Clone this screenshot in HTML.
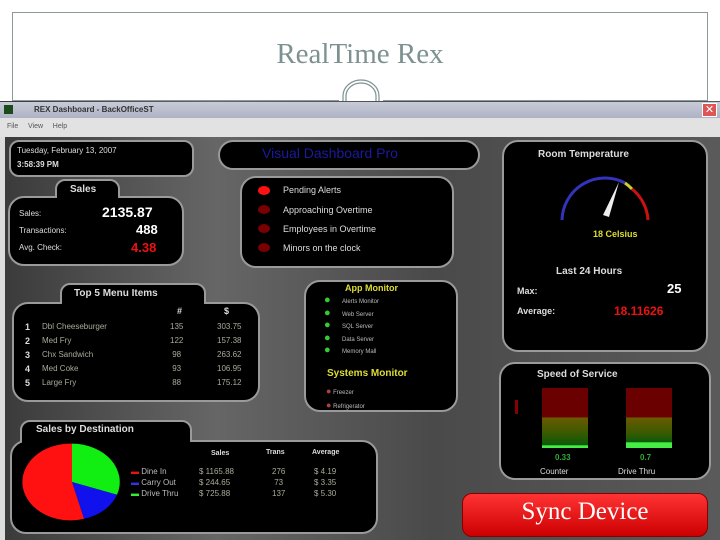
<!DOCTYPE html>
<html><head><meta charset="utf-8"><style>
*{margin:0;padding:0;box-sizing:border-box}
body{width:720px;height:540px;overflow:hidden;background:#fff;position:relative;font-family:"Liberation Sans",sans-serif}
.a{position:absolute}
.p{position:absolute;background:#000;border:2px solid #9a9a9a;border-radius:16px}
.t{position:absolute;font-size:9px;color:#ddd;white-space:nowrap}
.b{font-weight:bold}
</style></head><body>
<div class="a" style="left:12px;top:12px;width:696px;height:89px;border:1px solid #8a9a99"></div>
<div class="a" style="left:0;top:38px;width:720px;text-align:center;font-family:'Liberation Serif',serif;font-size:29px;color:#7d9190">Real​Time Rex</div>
<div class="a" style="left:339px;top:78px;width:44px;height:28px;background:#fff"></div>
<svg class="a" style="left:338px;top:78px" width="46" height="26"><path d="M5 26 V18 A18 16 0 0 1 41 18 V26" fill="none" stroke="#7d9190" stroke-width="1.2"/><path d="M8 26 V18 A15 13 0 0 1 38 18 V26" fill="none" stroke="#7d9190" stroke-width="1.2"/></svg>
<div class="a" style="left:0;top:101px;width:720px;height:439px;background:linear-gradient(90deg,#3a3a3a,#666 30%,#4a4a4a 60%,#5a5a5a)"></div>
<div class="a" style="left:0;top:102px;width:720px;height:16px;background:linear-gradient(#c8cbd8,#aeb2c4)"></div>
<div class="a" style="left:4px;top:105px;width:9px;height:9px;background:#1b4a1b"></div>
<div class="t b" style="left:34px;top:105px;color:#333;font-size:8px">REX Dashboard - BackOfficeST</div>
<div class="a" style="left:702px;top:103px;width:15px;height:14px;background:#d55;border:1px solid #fff;color:#fff;font-size:11px;text-align:center;line-height:12px">✕</div>
<div class="a" style="left:0;top:118px;width:720px;height:19px;background:#e2e2e2"></div>
<div class="t" style="left:7px;top:123px;color:#555;font-size:7px">File&nbsp;&nbsp;&nbsp;&nbsp;&nbsp;View&nbsp;&nbsp;&nbsp;&nbsp;&nbsp;Help</div>
<div class="a" style="left:0;top:137px;width:5px;height:403px;background:#ddd"></div>

<div class="p" style="left:9px;top:140px;width:185px;height:37px;border-radius:10px"></div>
<div class="t" style="left:17px;top:146px;font-size:8px">Tuesday, February 13, 2007</div>
<div class="t b" style="left:17px;top:160px;font-size:8px">3:58:39 PM</div>
<div class="p" style="left:218px;top:140px;width:262px;height:30px;border-radius:15px"></div>
<div class="t" style="left:262px;top:145px;font-size:14px;color:#1a1aa0">Visual Dashboard Pro</div>

<div class="p" style="left:240px;top:176px;width:214px;height:92px"></div>
<div class="a" style="left:258px;top:186px;width:12px;height:9px;border-radius:50%;background:#f11"></div>
<div class="a" style="left:258px;top:205px;width:12px;height:9px;border-radius:50%;background:#700"></div>
<div class="a" style="left:258px;top:224px;width:12px;height:9px;border-radius:50%;background:#700"></div>
<div class="a" style="left:258px;top:243px;width:12px;height:9px;border-radius:50%;background:#700"></div>
<div class="t" style="left:283px;top:185px">Pending Alerts</div>
<div class="t" style="left:283px;top:205px">Approaching Overtime</div>
<div class="t" style="left:283px;top:224px">Employees in Overtime</div>
<div class="t" style="left:283px;top:243px">Minors on the clock</div>

<div class="p" style="left:55px;top:179px;width:65px;height:26px;border-radius:10px 10px 0 0"></div>
<div class="p" style="left:8px;top:196px;width:176px;height:70px"></div>
<div class="a" style="left:57px;top:194px;width:61px;height:6px;background:#000"></div>
<div class="t b" style="left:70px;top:184px;font-size:10px">Sales</div>
<div class="t" style="left:19px;top:209px;font-size:8px">Sales:</div>
<div class="t" style="left:19px;top:226px;font-size:8px">Transactions:</div>
<div class="t" style="left:19px;top:243px;font-size:8px">Avg. Check:</div>
<div class="t b" style="left:102px;top:204px;font-size:14px;color:#fff">2135.87</div>
<div class="t b" style="left:136px;top:222px;font-size:13px;color:#fff">488</div>
<div class="t b" style="left:131px;top:240px;font-size:13px;color:#e11">4.38</div>

<div class="p" style="left:502px;top:140px;width:206px;height:212px"></div>
<div class="t b" style="left:538px;top:149px;font-size:10px">Room Temperature</div>
<svg class="a" style="left:555px;top:170px" width="100" height="55"><path d="M7 50 A43 43 0 0 1 70 13" fill="none" stroke="#3333bb" stroke-width="3"/><path d="M70 13 A43 43 0 0 1 77 19" fill="none" stroke="#cc3" stroke-width="3"/><path d="M77 19 A43 43 0 0 1 93 50" fill="none" stroke="#c11" stroke-width="3"/><path d="M48 45 L64 12 L54 47 Z" fill="#eee"/></svg>
<div class="t b" style="left:593px;top:229px;color:#dd3">18 Celsius</div>
<div class="t b" style="left:556px;top:266px;font-size:10px">Last 24 Hours</div>
<div class="t b" style="left:517px;top:286px;font-size:9px">Max:</div>
<div class="t b" style="left:667px;top:281px;font-size:13px;color:#fff">25</div>
<div class="t b" style="left:517px;top:306px;font-size:9px">Average:</div>
<div class="t b" style="left:614px;top:304px;font-size:12px;color:#e11">18.11626</div>

<div class="p" style="left:60px;top:283px;width:146px;height:26px;border-radius:10px 10px 0 0"></div>
<div class="p" style="left:12px;top:302px;width:248px;height:100px"></div>
<div class="a" style="left:62px;top:300px;width:142px;height:7px;background:#000"></div>
<div class="t b" style="left:74px;top:288px;font-size:10px">Top 5 Menu Items</div>
<div class="t b" style="left:177px;top:306px">#</div><div class="t b" style="left:224px;top:306px">$</div>
<div class="t b" style="left:25px;top:320px;line-height:14px;font-size:9px">1<br>2<br>3<br>4<br>5</div>
<div class="t" style="left:42px;top:320px;line-height:14px;font-size:8px;color:#aa9">Dbl Cheeseburger<br>Med Fry<br>Chx Sandwich<br>Med Coke<br>Large Fry</div>
<div class="t" style="left:170px;top:320px;line-height:14px;font-size:8px;color:#aa9">135<br>122<br>&nbsp;98<br>&nbsp;93<br>&nbsp;88</div>
<div class="t" style="left:217px;top:320px;line-height:14px;font-size:8px;color:#aa9">303.75<br>157.38<br>263.62<br>106.95<br>175.12</div>

<div class="p" style="left:304px;top:280px;width:154px;height:132px"></div>
<div class="t b" style="left:345px;top:283px;font-size:9px;color:#dd3">App Monitor</div>
<div class="t" style="left:342px;top:296px;line-height:12.5px;font-size:6px;color:#bbb">Alerts Monitor<br>Web Server<br>SQL Server<br>Data Server<br>Memory Mall</div>
<div class="a" style="left:324px;top:294px;width:12px;color:#3c3;font-size:11px;line-height:12.5px">●<br>●<br>●<br>●<br>●</div>
<div class="t b" style="left:327px;top:368px;font-size:10px;color:#dd3">Systems Monitor</div>
<div class="t" style="left:326px;top:385px;line-height:12px;font-size:6px;color:#bbb"><span style="color:#a44;font-size:9px">●</span> Freezer<br><span style="color:#a44;font-size:9px">●</span> Refrigerator</div>

<div class="p" style="left:499px;top:362px;width:212px;height:118px"></div>
<div class="t b" style="left:537px;top:369px;font-size:10px">Speed of Service</div>
<div class="a" style="left:542px;top:388px;width:46px;height:60px;background:linear-gradient(#6a0000 0,#6a0000 48%,#6a5a00 50%,#3a5a00 75%,#0a5a0a 95%,#4e4 96%)"></div>
<div class="a" style="left:626px;top:388px;width:46px;height:60px;background:linear-gradient(#6a0000 0,#6a0000 48%,#6a5a00 50%,#3a5a00 75%,#0a5a0a 90%,#4e4 91%)"></div>
<div class="a" style="left:515px;top:400px;width:3px;height:14px;background:#800"></div>
<div class="t b" style="left:555px;top:453px;font-size:8px;color:#3a3">0.33</div>
<div class="t b" style="left:640px;top:453px;font-size:8px;color:#3a3">0.7</div>
<div class="t" style="left:540px;top:467px;font-size:8px">Counter</div>
<div class="t" style="left:618px;top:467px;font-size:8px">Drive Thru</div>

<div class="p" style="left:20px;top:420px;width:172px;height:26px;border-radius:10px 10px 0 0"></div>
<div class="p" style="left:10px;top:440px;width:368px;height:94px"></div>
<div class="a" style="left:22px;top:438px;width:168px;height:7px;background:#000"></div>
<div class="t b" style="left:36px;top:424px;font-size:10px">Sales by Destination</div>
<svg class="a" style="left:0;top:430px" width="130" height="100"><g transform="translate(72 52) scale(1 0.8)"><path d="M0 0 L0 -48 A48 48 0 0 1 45 16 Z" fill="#1e1"/><path d="M0 0 L45 16 A48 48 0 0 1 12 46 Z" fill="#11e"/><path d="M0 0 L12 46 A48 48 0 1 1 0 -48 Z" fill="#f11"/></g></svg>
<div class="t b" style="left:211px;top:450px;font-size:7px">Sales</div>
<div class="t b" style="left:266px;top:449px;font-size:7px">Trans</div>
<div class="t b" style="left:312px;top:449px;font-size:7px">Average</div>
<div class="t" style="left:131px;top:466px;line-height:11px;font-size:8px;color:#bbb"><span style="color:#e11">▬</span> Dine In<br><span style="color:#33e">▬</span> Carry Out<br><span style="color:#3e3">▬</span> Drive Thru</div>
<div class="t" style="left:199px;top:466px;line-height:11px;font-size:8px;color:#aa9">$ 1165.88<br>$ 244.65<br>$ 725.88</div>
<div class="t" style="left:272px;top:466px;line-height:11px;font-size:8px;color:#aa9">276<br>&nbsp;73<br>137</div>
<div class="t" style="left:314px;top:466px;line-height:11px;font-size:8px;color:#aa9">$ 4.19<br>$ 3.35<br>$ 5.30</div>

<div class="a" style="left:462px;top:493px;width:246px;height:44px;background:linear-gradient(#f33,#c00);border-radius:10px;border:1px solid #800"></div>
<div class="t" style="left:462px;top:498px;width:246px;text-align:center;font-family:'Liberation Serif',serif;font-size:25px;color:#fff">Sync Device</div>
</body></html>
